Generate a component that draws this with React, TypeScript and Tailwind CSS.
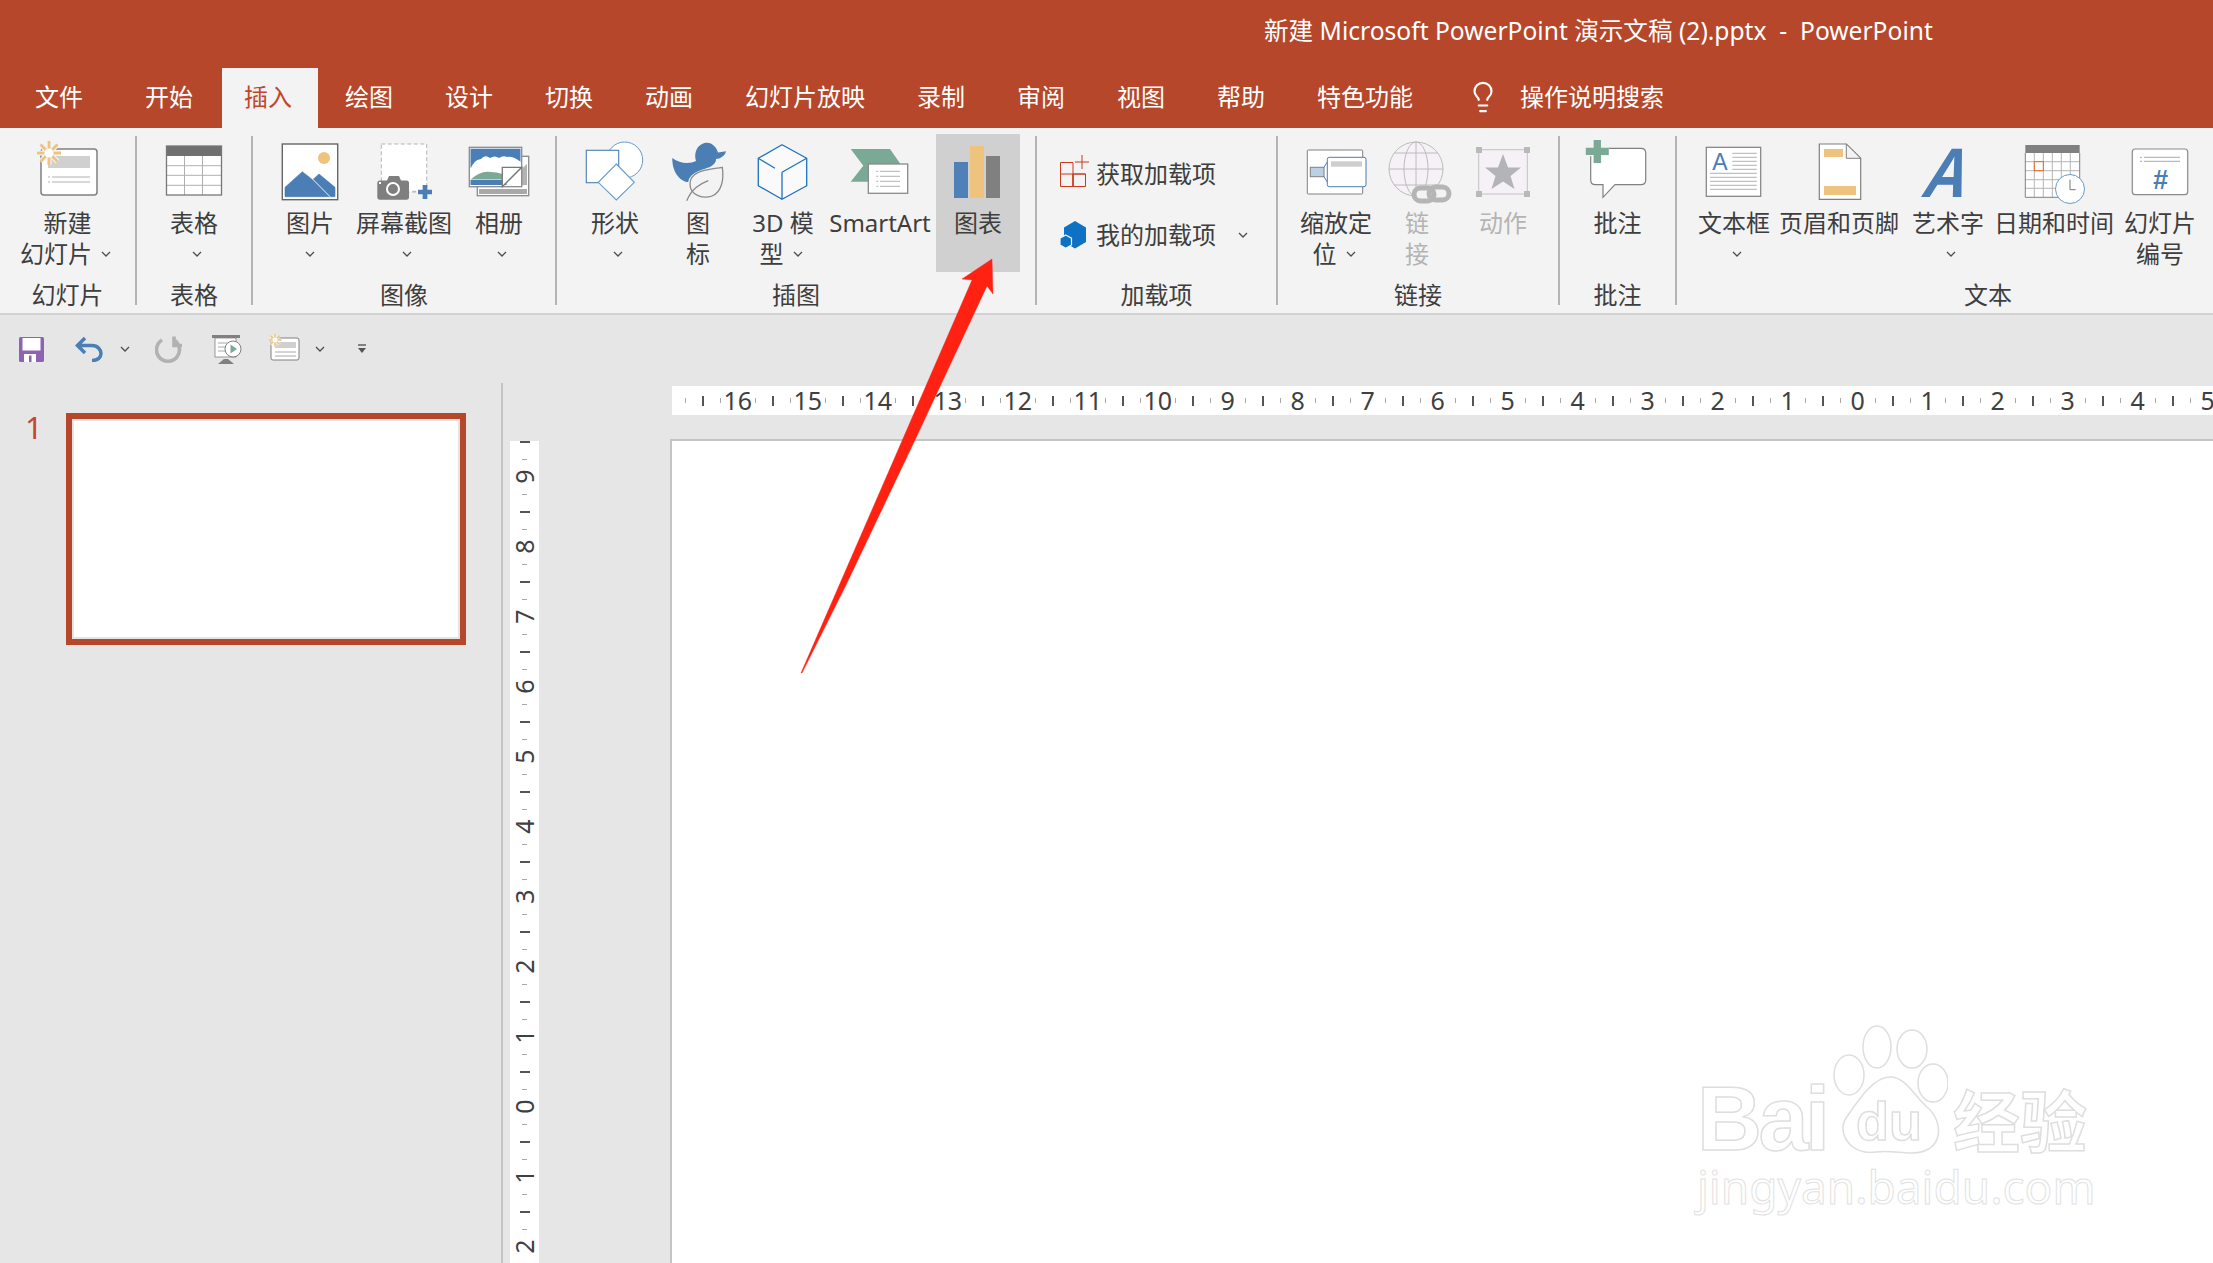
import React from "react";
import { Lightbulb } from "lucide-react";

const BLUE = "#4a7eb5";
const ORANGE = "#edc37e";
const GREEN = "#7aa996";
const GRAY = "#808080";

function Chevron({ color = "#4d4d4d" }: { color?: string }) {
  return (
    <svg width="10" height="6" viewBox="0 0 10 6" className="shrink-0">
      <path d="M1 1 L5 5 L9 1" fill="none" stroke={color} strokeWidth="1.3" />
    </svg>
  );
}

function Ic({ children }: { children: React.ReactNode }) {
  return (
    <svg width="84" height="74" viewBox="-42 0 84 74" className="shrink-0 overflow-visible">
      {children}
    </svg>
  );
}

function Sun({ x, y, r = 12 }: { x: number; y: number; r?: number }) {
  const a = [0, 45, 90, 135];
  return (
    <g>
      {a.map((d) => (
        <line key={"h" + d} x1={x - r} y1={y} x2={x + r} y2={y} stroke="#f3f3f3" strokeWidth={r / 2.4} transform={`rotate(${d} ${x} ${y})`} />
      ))}
      {a.map((d) => (
        <line key={d} x1={x - r} y1={y} x2={x + r} y2={y} stroke={ORANGE} strokeWidth={r / 4.4} transform={`rotate(${d} ${x} ${y})`} />
      ))}
      <circle cx={x} cy={y} r={r / 2.6} fill="#fff" />
    </g>
  );
}

function Btn({
  w,
  icon,
  lines,
  chevron,
  disabled,
  hot,
  straight,
}: {
  w: string;
  icon: React.ReactNode;
  lines: string[];
  chevron?: "below" | "inline";
  disabled?: boolean;
  hot?: boolean;
  straight?: boolean;
}) {
  return (
    <div
      className={`${w} h-[138px] shrink-0 flex flex-col items-center ${hot ? "bg-[#d0d0d0]" : ""} ${
        disabled ? "text-[#b4b4b4]" : "text-[#3e3e3e]"
      }`}
    >
      {icon}
      {lines.map((l, i) => (
        <div
          key={i}
          className={`h-[30px] leading-[30px] whitespace-nowrap flex items-center justify-center gap-[9px] ${i > 0 ? "mt-px" : ""} ${
            chevron === "inline" && i === lines.length - 1 ? "pr-[4px]" : ""
          }`}
        >
          <span>{l}</span>
          {chevron === "inline" && i === lines.length - 1 && <Chevron />}
        </div>
      ))}
      {chevron === "below" && (
        <div className={`h-[31px] flex items-center ${straight ? "" : "pl-[6px]"}`}>
          <Chevron />
        </div>
      )}
    </div>
  );
}

function Group({ w, label, inner, children }: { w: string; label: string; inner?: string; children: React.ReactNode }) {
  return (
    <div className={`${w} shrink-0 flex flex-col`}>
      <div className={`h-[138px] flex ${inner ?? ""}`}>{children}</div>
      <div className="mt-[8px] h-[30px] leading-[30px] text-center text-[#3e3e3e] whitespace-nowrap">{label}</div>
    </div>
  );
}

function Sep() {
  return <div className="w-[2px] h-[169px] mt-[2px] bg-[#b4b4b4] shrink-0" />;
}

function HRuler() {
  const nums = [16, 15, 14, 13, 12, 11, 10, 9, 8, 7, 6, 5, 4, 3, 2, 1, 0, 1, 2, 3, 4, 5];
  return (
    <div className="ml-[169px] h-[29px] bg-white flex items-center pl-[4.5px] text-[25px] text-[#404040]">
      <div className="w-[17.5px] shrink-0 flex justify-center">
        <div className="w-px h-[5px] bg-[#a8a8a8]" />
      </div>
      {nums.map((n, i) => (
        <div key={i} className="w-[70px] shrink-0 flex items-center">
          <div className="w-[17.5px] flex justify-center">
            <div className="w-[2px] h-[10px] bg-[#555]" />
          </div>
          <div className="w-[17.5px] flex justify-center">
            <div className="w-px h-[5px] bg-[#a8a8a8]" />
          </div>
          <div className="w-[31.5px] -mx-[7px] h-[29px] flex items-center justify-center leading-none">
            <span>{n}</span>
          </div>
          <div className="w-[17.5px] flex justify-center">
            <div className="w-px h-[5px] bg-[#a8a8a8]" />
          </div>
        </div>
      ))}
    </div>
  );
}

function VRuler() {
  const nums = [9, 8, 7, 6, 5, 4, 3, 2, 1, 0, 1, 2];
  return (
    <div className="ml-[7px] mt-[2px] w-[29px] bg-white flex flex-col items-center text-[25px] text-[#404040]">
      <div className="-mt-[8px] flex flex-col items-center">
        {nums.map((n, i) => (
          <div key={i} className="h-[70px] w-[29px] shrink-0 flex flex-col items-center">
            <div className="h-[17.5px] flex items-center">
              <div className="h-[2px] w-[10px] bg-[#555]" />
            </div>
            <div className="h-[17.5px] flex items-center">
              <div className="h-px w-[5px] bg-[#a8a8a8]" />
            </div>
            <div className="h-[31.5px] -my-[7px] flex items-center justify-center leading-none">
              <span className="-rotate-90 inline-block -ml-px">{n}</span>
            </div>
            <div className="h-[17.5px] flex items-center">
              <div className="h-px w-[5px] bg-[#a8a8a8]" />
            </div>
          </div>
        ))}
      </div>
    </div>
  );
}

const tabs = ["开始", "插入", "绘图", "设计", "切换", "动画", "幻灯片放映", "录制", "审阅", "视图", "帮助", "特色功能"];

export default function App() {
  return (
    <div className="relative w-[2213px] h-[1263px] overflow-hidden bg-[#e6e6e6] flex flex-col text-[24px] font-['Noto_Sans','Noto_Sans_CJK_SC',sans-serif]">
      {/* title */}
      <div className="h-[68px] shrink-0 bg-[#b7472a] text-white pl-[1264px] pt-[13px] leading-[36px] text-[24.6px] whitespace-pre">
        新建 Microsoft PowerPoint 演示文稿 (2).pptx  -  PowerPoint
      </div>

      {/* tabs */}
      <div className="h-[60px] shrink-0 bg-[#b7472a] text-white flex gap-1 pb-[2px]">
        <div className="pl-[35px] pr-[34px] flex items-center">文件</div>
        {tabs.map((t) =>
          t === "插入" ? (
            <div key={t} className="pl-[24px] pr-[24px] ml-px -mr-px -mb-[2px] pb-[2px] flex items-center bg-[#f3f3f3] text-[#c2462a]">
              <span className="-ml-[2px] mr-[2px]">{t}</span>
            </div>
          ) : (
            <div key={t} className="px-6 flex items-center">
              {t}
            </div>
          )
        )}
        <div className="ml-[25px] flex items-center">
          <Lightbulb size={34} strokeWidth={1.5} />
        </div>
        <div className="ml-[16px] flex items-center">操作说明搜索</div>
      </div>

      {/* ribbon */}
      <div className="h-[187px] shrink-0 bg-[#f3f3f3] border-b-2 border-[#d2d2d2] flex pt-[6px]">
        <Group w="w-[135px]" label="幻灯片">
          <Btn
            w="w-[135px]"
            lines={["新建", "幻灯片"]}
            chevron="inline"
            icon={
              <Ic>
                <rect x="-27" y="15" width="56" height="46" rx="3" fill="#fff" stroke={GRAY} strokeWidth="1.5" />
                <rect x="-20" y="22" width="42" height="12" fill="#d0d0d0" />
                <path d="M-16 43H22M-16 48H22" stroke="#b0b0b0" strokeWidth="1" />
                <path d="M-20 43H-18M-20 48H-18" stroke="#b0b0b0" strokeWidth="1" />
                <Sun x={-19} y={19} />
              </Ic>
            }
          />
        </Group>
        <Sep />
        <Group w="w-[114px]" label="表格">
          <Btn
            w="w-[114px]"
            lines={["表格"]}
            chevron="below"
            icon={
              <Ic>
                <rect x="-27.5" y="12" width="55" height="49" fill="#fff" />
                <rect x="-27.5" y="12" width="55" height="10" fill="#707070" />
                <path d="M-9.5 22V61M8.5 22V61M-27.5 31.7H27.5M-27.5 41.3H27.5M-27.5 51.3H27.5" stroke="#b0b0b0" strokeWidth="1" />
                <rect x="-27.5" y="12" width="55" height="49" fill="none" stroke="#777" strokeWidth="1.3" />
              </Ic>
            }
          />
        </Group>
        <Sep />
        <Group w="w-[302px]" label="图像" inner="pl-[15px]">
          <Btn
            w="w-[84px]"
            lines={["图片"]}
            chevron="below"
            straight
            icon={
              <Ic>
                <rect x="-27.7" y="10" width="55.4" height="55.7" fill="#fff" stroke="#666" strokeWidth="1.4" />
                <circle cx="14" cy="24" r="6" fill={ORANGE} />
                <path d="M-25 53.3L-7.7 37.7L2.7 45.7L9 40L25 53.3V62.7H-25Z" fill={BLUE} stroke={BLUE} strokeWidth="0.6" strokeLinejoin="round" />
                <path d="M-0.7 41.7L20 62.7" stroke="#fff" strokeWidth="0.9" />
              </Ic>
            }
          />
          <Btn
            w="w-[104px]"
            lines={["屏幕截图"]}
            chevron="below"
            icon={
              <Ic>
                <rect x="-22.7" y="10" width="45.4" height="48" fill="#fff" stroke="#b5b5b5" strokeWidth="1" strokeDasharray="4 2.5" />
                <path d="M-26.7 49Q-26.7 46.5 -24 46.5H-17L-15 42H-5L-3 46.5H2.5Q5 46.5 5 49V63Q5 65.7 2.5 65.7H-24Q-26.7 65.7 -26.7 63Z" fill="#7f7f7f" />
                <circle cx="-11" cy="55" r="6" fill="none" stroke="#fff" strokeWidth="2" />
                <rect x="-25" y="48" width="2" height="2" fill="#fff" />
                <rect x="8.3" y="56.8" width="4" height="1" fill="#b5b5b5" />
                <path d="M14 58H28M21 51V65" stroke={BLUE} strokeWidth="4.7" />
              </Ic>
            }
          />
          <Btn
            w="w-[86px]"
            lines={["相册"]}
            chevron="below"
            icon={
              <Ic>
                <rect x="-21.7" y="22.3" width="51.4" height="39.4" fill="#fff" stroke="#8a8a8a" strokeWidth="1.3" />
                <rect x="-20" y="55" width="48" height="5" fill="#a8a8a8" />
                <path d="M3 52L28 30V51Z" fill="#b2b2b2" />
                <rect x="-29.7" y="13.3" width="52.4" height="39.4" fill="#fff" stroke="#8a8a8a" strokeWidth="1.3" />
                <rect x="-28.5" y="14.7" width="50" height="19" fill={BLUE} />
                <path d="M-28.5 36Q-26 26 -18 25Q-14 20 -9 24Q-4 21 0 24Q4 21 8 23Q14 22 22 28V40H-28.5Z" fill="#fff" />
                <path d="M-28.5 45.5Q-18 36 -8 38Q4 38 12 45.5Z" fill={GREEN} />
                <rect x="-28.5" y="46" width="36" height="5" fill={BLUE} />
                <path d="M3.3 33.3H22.7L3.3 52.7Z" fill="#fff" stroke="#777" strokeWidth="1.3" />
              </Ic>
            }
          />
        </Group>
        <Sep />
        <Group w="w-[478px]" label="插图" inner="pl-[19px]">
          <Btn
            w="w-[78px]"
            lines={["形状"]}
            chevron="below"
            icon={
              <Ic>
                <circle cx="9.7" cy="26" r="18" fill="#fff" stroke="#6a9acb" strokeWidth="1" />
                <rect x="-28.7" y="16.3" width="32.4" height="32.4" fill="#fff" stroke={BLUE} strokeWidth="1.1" />
                <path d="M1.3 30L19.3 48.3L1.3 66L-16.7 48.3Z" fill="#fff" stroke="#6a9acb" strokeWidth="1.1" />
              </Ic>
            }
          />
          <Btn
            w="w-[88px]"
            lines={["图", "标"]}
            icon={
              <Ic>
                <path d="M-25.7 24C-18 30 -8 30 -2 27C-6 12 8 5 15 11C18 13 19 16 20 18.5L28 17.3C27 22 22 25 18 25C18 29 15 31 12 33C4 36 -8 38 -9.7 48C-16 48 -26 40 -25.7 24Z" fill={BLUE} />
                <path d="M24.3 33.3C10 36 -8 36 -8 50C-8 62 6 65 14 62C24 58 26 45 24.3 33.3Z" fill="#f3f3f3" stroke="#8a8a8a" strokeWidth="1.3" />
                <path d="M-11.3 66.7C-6 54 2 50 10.3 46.7" fill="none" stroke="#8a8a8a" strokeWidth="1.3" />
              </Ic>
            }
          />
          <Btn
            w="w-[82px]"
            lines={["3D 模", "型"]}
            chevron="inline"
            icon={
              <Ic>
                <path d="M-1 10.7L23.7 24.3V51.7L-1 65.3L-24.7 51.7V24.3Z" fill="#fafafa" stroke="#1c72c0" strokeWidth="1.3" strokeLinejoin="round" />
                <path d="M-1 38.3V65.3M-1 38.3L23.7 24.3M-24.7 24.3L-8 34.3" fill="none" stroke="#1c72c0" strokeWidth="1.3" />
              </Ic>
            }
          />
          <Btn
            w="w-[112px]"
            lines={["SmartArt"]}
            icon={
              <Ic>
                <path d="M-29.3 15H10L21.7 31.7L10 47.7H-29.3L-16.7 31.7Z" fill={GREEN} />
                <rect x="-11.7" y="30" width="39.4" height="29.3" fill="#fff" stroke="#8a8a8a" strokeWidth="1.3" />
                <path d="M0 37.3H20M0 42.3H20M0 47.3H20M0 52.3H20M-3.7 37.3H-1.7M-3.7 42.3H-1.7M-3.7 47.3H-1.7M-3.7 52.3H-1.7" stroke="#a8a8a8" strokeWidth="0.9" />
              </Ic>
            }
          />
          <Btn
            w="w-[84px]"
            lines={["图表"]}
            hot
            icon={
              <Ic>
                <rect x="-24" y="28" width="14" height="36" fill="#4f81b8" />
                <rect x="-8" y="12" width="14" height="52" fill={ORANGE} />
                <rect x="8" y="22" width="14" height="42" fill={GRAY} />
              </Ic>
            }
          />
        </Group>
        <Sep />
        <Group w="w-[239px]" label="加载项" inner="flex-col pl-[23px] pt-[9px] text-[#3e3e3e]">
          <div className="h-[61px] flex items-center gap-[10px]">
            <svg width="26" height="26" viewBox="0 0 26 26" className="shrink-0 overflow-visible">
              <path d="M0.5 13H25.5M13 13V25.5M0.5 1.5H13V25.5H0.5ZM13 13H25.5V25.5H13Z" fill="none" stroke="#c8391d" strokeWidth="1" />
              <path d="M22 -6V8M15 1H29" stroke="#c8391d" strokeWidth="1" />
            </svg>
            <span>获取加载项</span>
          </div>
          <div className="h-[61px] flex items-center gap-[10px]">
            <svg width="26" height="28" viewBox="0 0 26 28" className="shrink-0">
              <path d="M15 0L26 6.5V21L15 27.5L4 21V6.5Z" fill="#0f71c4" />
              <path d="M5.7 14L11.5 17.2V24L5.7 27.3L0 24V17.2Z" fill="#0f71c4" stroke="#f3f3f3" strokeWidth="1.2" />
            </svg>
            <span>我的加载项</span>
            <span className="ml-[12px]">
              <Chevron />
            </span>
          </div>
        </Group>
        <Sep />
        <Group w="w-[280px]" label="链接" inner="pl-[8px]">
          <Btn
            w="w-[100px]"
            lines={["缩放定", "位"]}
            chevron="inline"
            icon={
              <Ic>
                <rect x="-28.7" y="16" width="55.4" height="44" rx="1" fill="#fff" stroke={GRAY} strokeWidth="1" />
                <rect x="-25.7" y="33.3" width="13.7" height="9.4" fill="#bcd0e4" stroke={GRAY} strokeWidth="1" />
                <path d="M-12 33.3L-8.7 28M-12 42.7L-8.7 48" stroke={BLUE} strokeWidth="1" fill="none" />
                <rect x="-8.7" y="23.3" width="38.7" height="29.4" rx="2" fill="#fff" stroke={BLUE} strokeWidth="1" />
                <rect x="-5" y="27.3" width="31" height="5.4" fill="#cecece" />
              </Ic>
            }
          />
          <Btn
            w="w-[62px]"
            lines={["链", "接"]}
            disabled
            icon={
              <Ic>
                <circle cx="-1" cy="35" r="27" fill="#f5f1f6" stroke="#bcbcbc" strokeWidth="1" />
                <ellipse cx="-1" cy="35" rx="12" ry="27" fill="none" stroke="#bcbcbc" strokeWidth="1" />
                <path d="M-1 8V62M-28 35H26M-23 19H21M-23 51H21" stroke="#bcbcbc" strokeWidth="1" fill="none" />
                <rect x="-3" y="54" width="20" height="13" rx="6.5" fill="#f3f3f3" stroke="#b5b5b5" strokeWidth="5" />
                <rect x="12" y="53" width="20" height="13" rx="6.5" fill="none" stroke="#b5b5b5" strokeWidth="5" />
              </Ic>
            }
          />
          <Btn
            w="w-[110px]"
            lines={["动作"]}
            disabled
            icon={
              <Ic>
                <rect x="-24.3" y="15.7" width="48.6" height="44.3" fill="#f5f1f6" stroke="#c4c0c4" strokeWidth="1" />
                <path d="M-27 13h6v6h-6zM21 13h6v6h-6zM-27 57h6v6h-6zM21 57h6v6h-6z" fill="#b9b9b9" />
                <path d="M0 20L5 33.5L18 33.5L7.5 42L11.5 55L0 47.5L-11.5 55L-7.5 42L-18 33.5L-5 33.5Z" fill="#b4b3b5" />
              </Ic>
            }
          />
        </Group>
        <Sep />
        <Group w="w-[115px]" label="批注">
          <Btn
            w="w-[115px]"
            lines={["批注"]}
            icon={
              <Ic>
                <path d="M-23 14.3H23Q27.7 14.3 27.7 19V46Q27.7 50.7 23 50.7H-3L-15 63.3V50.7H-22.7Q-27.3 50.7 -27.3 46V19Q-27.3 14.3 -23 14.3Z" fill="#fff" stroke={GRAY} strokeWidth="1.2" />
                <path d="M-32.2 17.3H-9.2M-20.7 6V29" stroke="#f3f3f3" strokeWidth="10" />
                <path d="M-32.2 17.3H-9.2M-20.7 6V29" stroke={GREEN} strokeWidth="7.3" />
              </Ic>
            }
          />
        </Group>
        <Sep />
        <Group w="w-[622px]" label="文本" inner="pl-[11px]">
          <Btn
            w="w-[92px]"
            lines={["文本框"]}
            chevron="below"
            icon={
              <Ic>
                <rect x="-27.7" y="13.3" width="54.4" height="49" fill="#fff" stroke={GRAY} strokeWidth="1.2" />
                <text x="-14" y="36" textAnchor="middle" fontSize="23" fill={BLUE} fontFamily="Liberation Sans">
                  A
                </text>
                <path d="M-1.7 19.3H22.7M-1.7 23.3H22.7M-1.7 27.3H22.7M-1.7 31.3H22.7M-1.7 35.3H22.7M-24 39.3H22.7M-24 43.3H22.7M-24 47.3H22.7M-24 51.3H22.7M-24 55.3H22.7" stroke="#a8a8a8" strokeWidth="0.9" />
              </Ic>
            }
          />
          <Btn
            w="w-[118px]"
            lines={["页眉和页脚"]}
            icon={
              <Ic>
                <path d="M-19.7 10H7.3L21.7 24.3V65.3H-19.7Z" fill="#fff" stroke={GRAY} strokeWidth="1.2" />
                <path d="M7.3 10V24.3H21.7Z" fill="#f3f3f3" stroke={GRAY} strokeWidth="1" />
                <rect x="-15" y="15" width="19" height="8" fill={ORANGE} />
                <rect x="-15" y="52" width="32" height="9" fill={ORANGE} />
              </Ic>
            }
          />
          <Btn
            w="w-[100px]"
            lines={["艺术字"]}
            chevron="below"
            icon={
              <Ic>
                <text transform="translate(-4 63) skewX(-9) scale(0.86 1)" textAnchor="middle" fontSize="70" fontWeight="bold" fontStyle="italic" fill={BLUE} fontFamily="Liberation Sans">
                  A
                </text>
              </Ic>
            }
          />
          <Btn
            w="w-[112px]"
            lines={["日期和时间"]}
            icon={
              <Ic>
                <rect x="-28.7" y="11" width="54.4" height="52.3" fill="#fff" />
                <path d="M-19.7 19V63.3M-10.7 19V63.3M-1.7 19V63.3M7.3 19V63.3M16.3 19V63.3M-28.7 27.7H25.7M-28.7 36.7H25.7M-28.7 45.7H25.7M-28.7 54.3H25.7" stroke="#b4b4b4" strokeWidth="1" />
                <path d="M-28.7 19V63.3H25.7V19" fill="none" stroke={GRAY} strokeWidth="1" />
                <rect x="-28.7" y="11" width="54.4" height="8" fill={GRAY} />
                <rect x="-19.7" y="27.7" width="9" height="9" fill="#fff" stroke="#d9661f" strokeWidth="1" />
                <circle cx="16" cy="55" r="14.5" fill="#fff" stroke="#6a9acb" strokeWidth="1" />
                <path d="M16 45.7V55.7H21.7" fill="none" stroke="#777" strokeWidth="1" />
              </Ic>
            }
          />
          <Btn
            w="w-[100px]"
            lines={["幻灯片", "编号"]}
            icon={
              <Ic>
                <rect x="-27.7" y="15" width="55.4" height="45.7" rx="3" fill="#fff" stroke="#8a8a8a" strokeWidth="1.2" />
                <path d="M-16 23.3H20M-16 27.3H20M-20 23.3H-18M-20 27.3H-18" stroke="#a8a8a8" strokeWidth="1" />
                <text x="0.3" y="55" textAnchor="middle" fontSize="27" fontWeight="bold" fontStyle="italic" fill={BLUE} fontFamily="Liberation Sans">
                  #
                </text>
              </Ic>
            }
          />
        </Group>
      </div>

      {/* quick access */}
      <div className="h-[68px] shrink-0 flex items-center pl-[19px]">
        <svg width="25" height="25" viewBox="0 0 25 25" className="shrink-0">
          <rect width="25" height="25" rx="1.5" fill="#8f63b3" />
          <rect x="3.5" y="1" width="18" height="12.5" fill="#fff" />
          <rect x="5" y="17" width="12" height="8" fill="#fff" />
          <rect x="10" y="18.5" width="2.5" height="6.5" fill="#8f63b3" />
        </svg>
        <svg width="28" height="26" viewBox="0 0 28 26" className="ml-[31px] shrink-0">
          <path d="M10 2L2.5 9.5L10 17M2.5 9.5H17C23 9.5 26 14 26 17.5C26 21 23 24.5 17 24.5" fill="none" stroke={BLUE} strokeWidth="3.5" />
        </svg>
        <span className="ml-[17px]">
          <Chevron />
        </span>
        <svg width="27" height="28" viewBox="0 0 27 28" className="ml-[25px] shrink-0">
          <path d="M19 1.5V10.5H27M19 5A11.5 11.5 0 1 1 7 5" fill="none" stroke="#b2b2b2" strokeWidth="3.6" />
        </svg>
        <svg width="30" height="29" viewBox="0 0 30 29" className="ml-[30px] shrink-0">
          <rect x="0" y="0" width="28" height="3" fill={GRAY} />
          <rect x="3" y="3" width="21" height="19" fill="#fff" stroke={GRAY} strokeWidth="0.8" />
          <path d="M6 8H16M6 12H14M6 16H14" stroke="#a8a8a8" strokeWidth="1" />
          <circle cx="21" cy="14" r="8" fill="#fff" stroke={GRAY} strokeWidth="1" />
          <path d="M18.5 9.5L25 14L18.5 18.5Z" fill={GREEN} />
          <path d="M6 29H22L16 24H12Z" fill={GRAY} />
        </svg>
        <svg width="30" height="28" viewBox="0 0 30 28" className="ml-[27px] shrink-0 overflow-visible">
          <rect x="2" y="3" width="28" height="22" rx="2" fill="#fff" stroke={GRAY} strokeWidth="1" />
          <rect x="6" y="7" width="21" height="6" fill="#d0d0d0" />
          <path d="M6 17H27M6 21H27" stroke="#a8a8a8" strokeWidth="1" />
          <Sun x={6} y={5} r={6.5} />
        </svg>
        <span className="ml-[16px]">
          <Chevron />
        </span>
        <svg width="10" height="10" viewBox="0 0 10 10" className="ml-[32px] shrink-0">
          <path d="M1 1H9" stroke="#555" strokeWidth="1.4" />
          <path d="M1 4H9L5 9Z" fill="#555" />
        </svg>
      </div>

      {/* workspace */}
      <div className="flex-1 flex min-h-0">
        <div className="w-[503px] shrink-0 border-r-2 border-[#c4c4c4] flex items-start pt-[28px] pl-[25px]">
          <div className="w-[41px] mt-px text-[31px] leading-[30px] text-[#c8472a]">1</div>
          <div className="mt-[2px] w-[400px] h-[232px] border-[6px] border-[#b7472a] bg-white shadow-[inset_0_0_0_2px_#e4e4e4]" />
        </div>
        <div className="flex-1 min-w-0 flex flex-col pt-[3px]">
          <HRuler />
          <div className="flex-1 flex mt-[24px] min-h-0">
            <VRuler />
            <div className="ml-[131px] flex-1 bg-white border-t-2 border-l-2 border-[#c4c4c4]" />
          </div>
        </div>
      </div>

      {/* annotation arrow */}
      <svg className="absolute left-[790px] top-[250px] w-[210px] h-[430px] pointer-events-none" viewBox="790 250 210 430">
        <path d="M801 673L972 280L962 279L992 259L993 294L987 286L915 440L847 583L802 673Z" fill="#ff2112" stroke="#ff2112" strokeWidth="0.4" />
      </svg>

      {/* watermark */}
      <div className="absolute left-[1697px] top-[1025px] w-[410px] flex flex-col pointer-events-none text-white [-webkit-text-stroke:1.5px_#dedede]">
        <div className="flex items-start h-[135px]">
          <div className="mt-[54px] w-[133px] text-[90px] leading-[80px] font-bold tracking-[-3.5px] font-['Liberation_Sans',sans-serif]">Bai</div>
          <svg width="118" height="132" viewBox="1830 1025 118 132" className="shrink-0 [-webkit-text-stroke:0]">
            <g fill="#fff" stroke="#dedede" strokeWidth="1.5">
              <ellipse cx="1849" cy="1075" rx="15" ry="20" />
              <ellipse cx="1877" cy="1047" rx="14" ry="21" />
              <ellipse cx="1912" cy="1049" rx="15" ry="19" />
              <ellipse cx="1933" cy="1083" rx="15" ry="19" />
              <path d="M1890 1077C1906 1077 1914 1096 1928 1108C1944 1122 1944 1153 1912 1153C1900 1153 1888 1150 1876 1152C1852 1156 1836 1134 1846 1118C1856 1104 1872 1077 1890 1077Z" />
              <text x="1889" y="1140" textAnchor="middle" fontSize="54" fontFamily="Liberation Sans" fontWeight="bold">
                du
              </text>
            </g>
          </svg>
          <div className="mt-[53px] ml-[5px] text-[67px] leading-[80px] font-bold whitespace-nowrap font-['Noto_Sans_CJK_SC',sans-serif]">经验</div>
        </div>
        <div className="-mt-[4px] text-[46px] leading-[60px] whitespace-nowrap [-webkit-text-stroke:1px_#e2e2e2]">jingyan.baidu.com</div>
      </div>
    </div>
  );
}
